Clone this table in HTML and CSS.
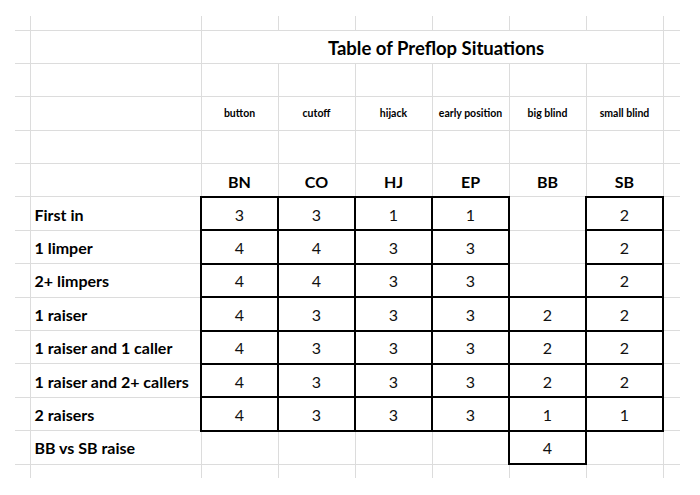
FILE: index.html
```html
<!DOCTYPE html>
<html>
<head>
<meta charset="utf-8">
<link rel="stylesheet" href="styles.css">
</head>
<body>
<div class="sheet">
<table class="grid">
  <colgroup>
    <col class="c-edge"><col class="c-label">
    <col class="c-pos"><col class="c-pos"><col class="c-pos"><col class="c-pos"><col class="c-pos"><col class="c-pos">
    <col class="c-tail">
  </colgroup>
  <tr class="r-part top"><td></td><td></td><td></td><td></td><td></td><td></td><td></td><td></td><td></td></tr>
  <tr><td></td><td></td><td class="title" colspan="6">Table of Preflop Situations</td><td></td></tr>
  <tr><td></td><td></td><td></td><td></td><td></td><td></td><td></td><td></td><td></td></tr>
  <tr class="names"><td></td><td></td><td>button</td><td>cutoff</td><td>hijack</td><td>early position</td><td>big blind</td><td>small blind</td><td></td></tr>
  <tr><td></td><td></td><td></td><td></td><td></td><td></td><td></td><td></td><td></td></tr>
  <tr class="abbr"><td></td><td></td><td>BN</td><td>CO</td><td>HJ</td><td>EP</td><td>BB</td><td>SB</td><td></td></tr>
  <tr><td></td><td class="label">First in</td><td class="v">3</td><td class="v">3</td><td class="v">1</td><td class="v">1</td><td></td><td class="v">2</td><td></td></tr>
  <tr><td></td><td class="label">1 limper</td><td class="v">4</td><td class="v">4</td><td class="v">3</td><td class="v">3</td><td></td><td class="v">2</td><td></td></tr>
  <tr><td></td><td class="label">2+ limpers</td><td class="v">4</td><td class="v">4</td><td class="v">3</td><td class="v">3</td><td></td><td class="v">2</td><td></td></tr>
  <tr><td></td><td class="label">1 raiser</td><td class="v">4</td><td class="v">3</td><td class="v">3</td><td class="v">3</td><td class="v">2</td><td class="v">2</td><td></td></tr>
  <tr><td></td><td class="label">1 raiser and 1 caller</td><td class="v">4</td><td class="v">3</td><td class="v">3</td><td class="v">3</td><td class="v">2</td><td class="v">2</td><td></td></tr>
  <tr><td></td><td class="label">1 raiser and 2+ callers</td><td class="v">4</td><td class="v">3</td><td class="v">3</td><td class="v">3</td><td class="v">2</td><td class="v">2</td><td></td></tr>
  <tr><td></td><td class="label">2 raisers</td><td class="v">4</td><td class="v">3</td><td class="v">3</td><td class="v">3</td><td class="v">1</td><td class="v">1</td><td></td></tr>
  <tr><td></td><td class="label">BB vs SB raise</td><td></td><td></td><td></td><td></td><td class="v">4</td><td></td><td></td></tr>
  <tr class="r-part bottom"><td></td><td></td><td></td><td></td><td></td><td></td><td></td><td></td><td></td></tr>
</table>
</div>
</body>
</html>
```
FILE: styles.css
```css
html, body {
  margin: 0;
  padding: 0;
  background: #ffffff;
}
body {
  width: 700px;
  height: 495px;
  overflow: hidden;
  font-family: Lato, "Open Sans", "Liberation Sans", sans-serif;
  color: #000;
}
.sheet {
  padding: 16px 0 0 15px;
}
.grid {
  border-collapse: collapse;
  table-layout: fixed;
  width: 665px;
}
.c-edge { width: 15px; }
.c-label { width: 171px; }
.c-pos { width: 77px; }
.c-tail { width: 17px; }

.grid td {
  height: 33.4px;
  padding: 2px 0 0 0;
  border: 1px solid #dcdcdc;
  text-align: center;
  vertical-align: middle;
  font-size: 16px;
  font-weight: 700;
  line-height: 1;
  white-space: nowrap;
  overflow: hidden;
  box-sizing: border-box;
}
.grid tr.r-part td { height: 14px; padding: 0; }
.grid tr.top td { border-top: none; }
.grid tr.bottom td { border-bottom: none; }
.grid td:first-child { border-left: none; }
.grid td:last-child { border-right: none; }

.grid td.title {
  font-size: 18.5px;
  padding: 3px 0 0 8px;
}
.grid tr.names td {
  font-size: 10.5px;
  padding-top: 0;
}
.grid tr.abbr td {
  padding-top: 3px;
}
.grid td.label {
  text-align: left;
  padding-left: 4px;
}
.grid td.v {
  font-weight: 400;
  border: 2px solid #000;
  color: #111;
}
```
